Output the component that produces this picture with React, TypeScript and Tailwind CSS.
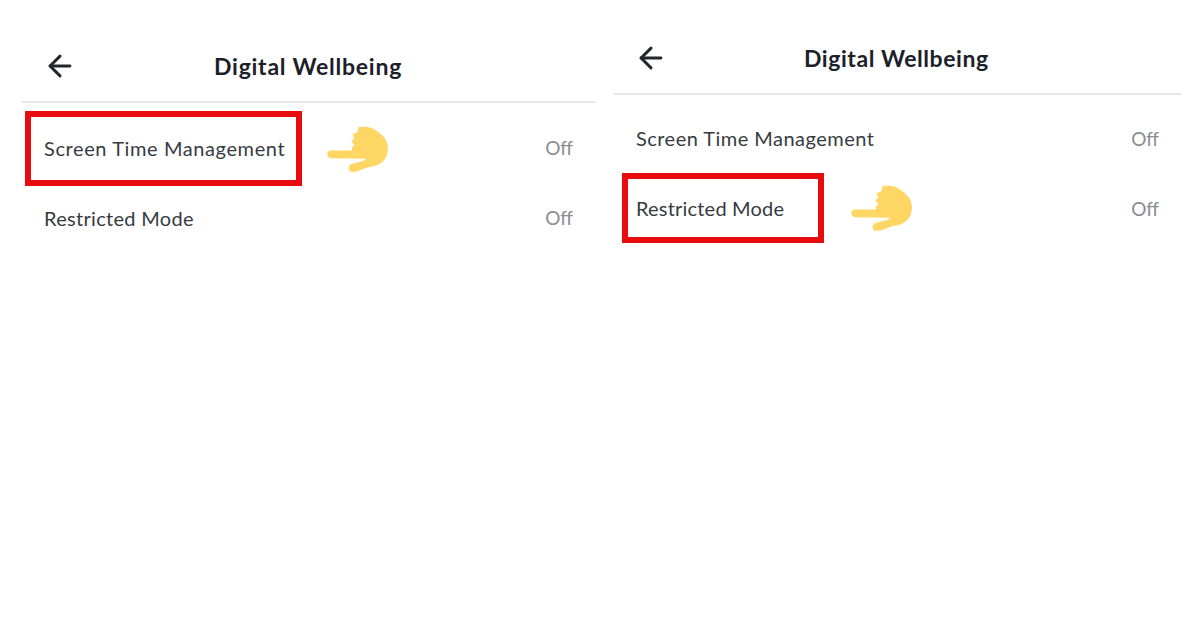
import { ArrowLeft } from "lucide-react";

function PointingHand({ className }: { className: string }) {
  return (
    <svg viewBox="0 0 62 46" className={className} fill="#fdd663">
      <path d="M31 1C38 0 45 1 49 5C56 9 60 15 60 22C60 33 52 39 43 40C36 41 32 45 25 45C20 45 20 38 25 37C30 35 34 36 39 32L4 31.5C-1 31.5 -1 24 4 24L25 24L24 21L27 19L24 15L27 12L25 8L30 6Z" />
    </svg>
  );
}

export default function App() {
  return (
    <div className="flex h-[628px] w-[1200px] items-start gap-[18px] overflow-hidden bg-white pl-[22px] font-['Lato','Liberation_Sans',sans-serif]">
      {/* left phone */}
      <section className="mt-[30px] w-[574px]">
        <header className="flex h-[73px] items-center border-b-2 border-[#e6e8e9] pt-[1px] pl-[21px]">
          <ArrowLeft className="h-[34px] w-[34px] shrink-0 text-[#22262b]" strokeWidth={2.1} />
          <h1 className="ml-[137px] text-[23px] font-bold tracking-[0.75px] text-[#1c2129]">Digital Wellbeing</h1>
        </header>
        <div className="relative mt-[10px] flex h-[70px] items-center justify-between pb-[1px] pl-[22px] pr-[23px]">
          <span className="text-[20px] tracking-[0.6px] text-[#373b41]">Screen Time Management</span>
          <span className="mt-[2px] text-[19px] text-[#8a8d91]">Off</span>
          <div className="absolute left-[3px] top-[-2px] h-[75px] w-[277px] border-[6px] border-[#e80c10]" />
          <PointingHand className="absolute left-[305px] top-[13px] h-[47px] w-[63px]" />
        </div>
        <div className="flex h-[70px] items-center justify-between pb-[1px] pl-[22px] pr-[23px]">
          <span className="text-[20px] tracking-[0.3px] text-[#373b41]">Restricted Mode</span>
          <span className="mt-[2px] text-[19px] text-[#8a8d91]">Off</span>
        </div>
      </section>

      {/* right phone */}
      <section className="mt-[22px] w-[567px]">
        <header className="flex h-[73px] items-center border-b-2 border-[#e6e8e9] pt-[1px] pl-[20px]">
          <ArrowLeft className="h-[34px] w-[34px] shrink-0 text-[#22262b]" strokeWidth={2.1} />
          <h1 className="ml-[136px] text-[23px] font-bold tracking-[0.55px] text-[#1c2129]">Digital Wellbeing</h1>
        </header>
        <div className="mt-[8px] flex h-[70px] items-center justify-between px-[22px]">
          <span className="text-[20px] tracking-[0.47px] text-[#373b41]">Screen Time Management</span>
          <span className="mt-[2px] text-[19px] text-[#8a8d91]">Off</span>
        </div>
        <div className="relative flex h-[70px] items-center justify-between px-[22px]">
          <span className="text-[20px] tracking-[0.2px] text-[#373b41]">Restricted Mode</span>
          <span className="mt-[2px] text-[19px] text-[#8a8d91]">Off</span>
          <div className="absolute left-[8px] top-0 h-[70px] w-[202px] border-[6px] border-[#e80c10]" />
          <PointingHand className="absolute left-[237px] top-[12px] h-[47px] w-[63px]" />
        </div>
      </section>
    </div>
  );
}
